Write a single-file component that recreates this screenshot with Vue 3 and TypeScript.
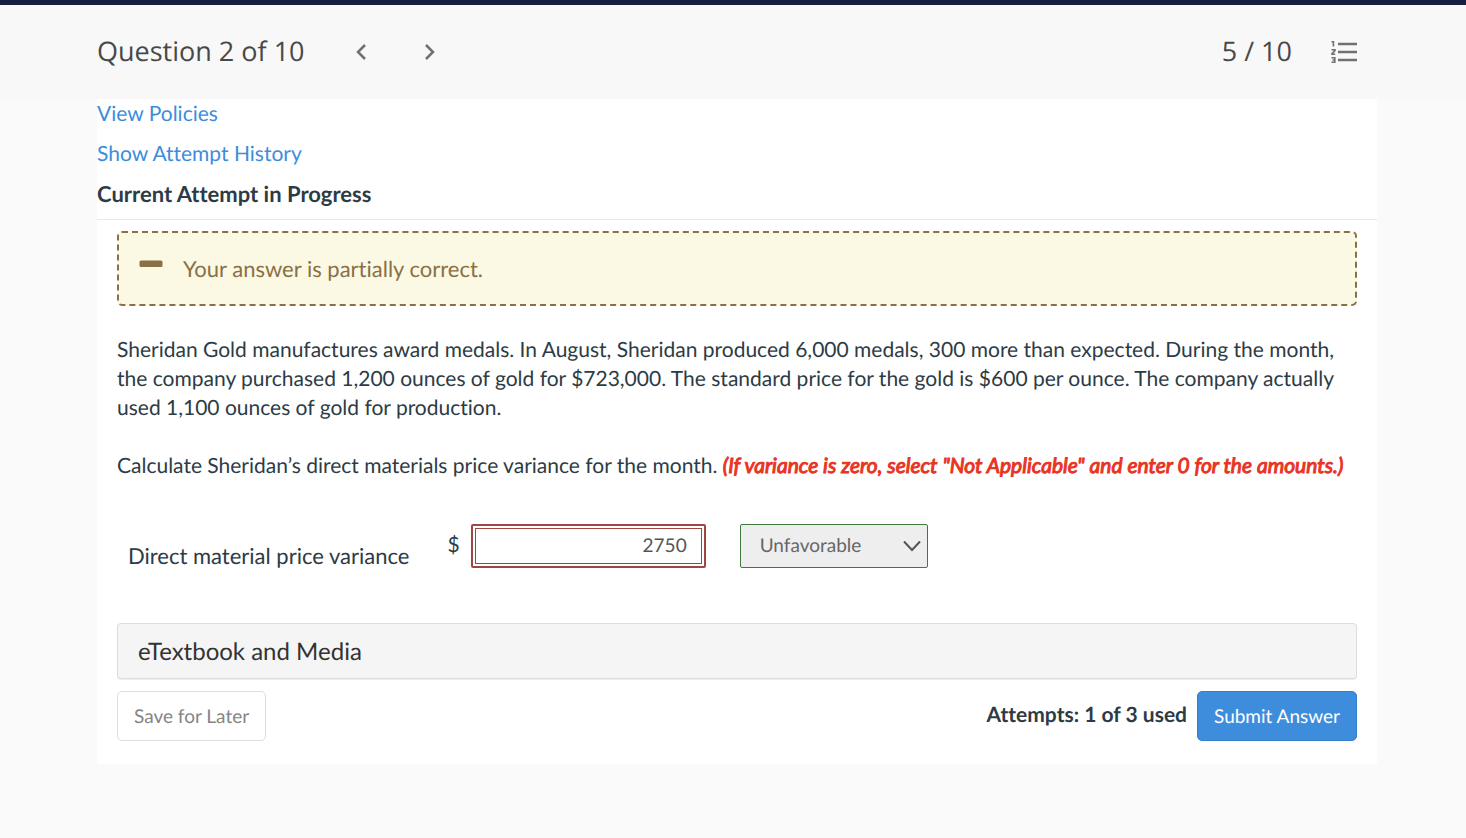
<script setup lang="ts">
import { ref } from 'vue'

const question = ref(2)
const total = 10
const amount = ref('2750')
const direction = ref('Unfavorable')
const directions: string[] = ['Favorable', 'Unfavorable', 'Not Applicable']
</script>

<template>
  <div class="page">
    <header class="topbar">
      <h1 class="title">Question {{ question }} of {{ total }}</h1>
      <nav class="pager">
        <button type="button" class="icon-btn" aria-label="Previous question">
          <svg width="12" height="18" viewBox="0 0 12 18"><path d="M10 2 L3 9 L10 16" /></svg>
        </button>
        <button type="button" class="icon-btn" aria-label="Next question">
          <svg width="12" height="18" viewBox="0 0 12 18"><path d="M2 2 L9 9 L2 16" /></svg>
        </button>
      </nav>
      <span class="score">5 / 10</span>
      <button type="button" class="icon-btn list-btn" aria-label="Question list">
        <svg width="28" height="24" viewBox="0 0 28 24">
          <path class="bars" d="M8 4 H27 M8 12 H27 M8 20 H27" />
          <path class="digits" d="M1.5 1.8 H3.4 V6.5 M1.5 9.8 H5 V10.6 L2 13.6 V14.2 H5.2 M1.5 17.8 H4.8 V22.2 H1.5 M2.5 20 H4.8" />
        </svg>
      </button>
    </header>

    <main class="sheet">
      <div class="intro">
        <a href="#policies">View Policies</a>
        <a href="#history">Show Attempt History</a>
        <h2>Current Attempt in Progress</h2>
      </div>

      <div class="body">
        <div class="alert" role="status">
          <svg width="24" height="8" viewBox="0 0 24 8" aria-hidden="true"><rect x="0.5" y="0.5" width="23" height="6.5" rx="1.5" /></svg>
          <span>Your answer is partially correct.</span>
        </div>

        <p class="text">
          Sheridan Gold manufactures award medals. In August, Sheridan produced 6,000 medals, 300 more than expected. During the month,
          the company purchased 1,200 ounces of gold for $723,000. The standard price for the gold is $600 per ounce. The company actually
          used 1,100 ounces of gold for production.
        </p>
        <p class="text">
          Calculate Sheridan’s direct materials price variance for the month.
          <em class="note">(If variance is zero, select "Not Applicable" and enter 0 for the amounts.)</em>
        </p>

        <form class="answer" @submit.prevent>
          <label class="label" for="amount">Direct material price variance</label>
          <span class="currency">$</span>
          <span class="field"><input id="amount" v-model="amount" type="text" /></span>
          <span class="picker">
            <select v-model="direction" aria-label="Variance direction">
              <option v-for="d in directions" :key="d">{{ d }}</option>
            </select>
            <svg class="caret" width="18" height="12" viewBox="0 0 18 12" aria-hidden="true"><path d="M1 1.5 L9 10 L17 1.5" /></svg>
          </span>
        </form>

        <button type="button" class="media">eTextbook and Media</button>

        <footer class="actions">
          <button type="button" class="btn">Save for Later</button>
          <strong class="attempts">Attempts: 1 of 3 used</strong>
          <button type="button" class="btn primary">Submit Answer</button>
        </footer>
      </div>
    </main>
  </div>
</template>

<style>
body {
  margin: 0;
  background: #fafafa;
}
</style>

<style scoped>
* {
  box-sizing: border-box;
}
.page {
  min-height: 100vh;
  border-top: 5px solid #161f41;
  font-family: Lato, sans-serif;
  font-size: 21px;
  line-height: 29px;
  color: #2d3b45;
  text-rendering: geometricPrecision;
  font-variant-ligatures: none;
}
button,
input,
select {
  font-family: inherit;
  text-rendering: inherit;
  font-variant-ligatures: inherit;
  margin: 0;
}
.topbar {
  display: flex;
  align-items: center;
  height: 94px;
  padding: 0 108px 0 97px;
  background: #f8f8f8;
  font-family: "Open Sans", sans-serif;
  font-size: 27px;
  color: #484848;
}
.title {
  margin: 0;
  font-size: inherit;
  font-weight: 400;
}
.title,
.score {
  padding-bottom: 3px;
}
.pager {
  display: flex;
  gap: 57px;
  margin-left: 50px;
}
.icon-btn {
  display: flex;
  padding: 0;
  border: 0;
  background: none;
}
.icon-btn path {
  fill: none;
  stroke: #707070;
  stroke-width: 2.5;
}
.icon-btn .digits {
  stroke-width: 1.6;
}
.score {
  margin-left: auto;
}
.list-btn {
  margin-left: 38px;
}
.sheet {
  margin: 0 89px 0 97px;
  background: #fff;
}
.intro {
  display: flex;
  flex-direction: column;
  align-items: flex-start;
  gap: 11px;
  padding-bottom: 11px;
  border-bottom: 1px solid #e8e8e8;
}
.intro a {
  color: #3d8ddb;
  text-decoration: none;
}
.intro h2 {
  margin: 0;
  font-size: 22px;
  font-weight: 700;
}
.body {
  padding: 11px 20px 23px;
}
.alert {
  display: flex;
  align-items: center;
  gap: 20px;
  height: 75px;
  padding: 0 20px;
  border: 2px dashed #8a7045;
  border-radius: 5px;
  background: #fbf8e4;
  color: #8a7045;
  font-size: 22px;
}
.alert svg {
  fill: #8a7045;
  margin-bottom: 10px;
}
.text {
  margin: 29px 0;
}
.note {
  color: #e93323;
  font-style: italic;
  -webkit-text-stroke: 1px #e93323;
}
.answer {
  display: flex;
  align-items: center;
  margin: 41px 0 53px;
  padding-left: 11px;
}
.label {
  padding-top: 20px;
  font-size: 22px;
}
.currency {
  margin-left: 38px;
  padding-bottom: 3px;
}
.field {
  width: 235px;
  height: 44px;
  margin-left: 11px;
  padding: 2px;
  border: 2px solid #9f4542;
  border-radius: 2px;
}
.field input {
  display: block;
  width: 100%;
  height: 100%;
  padding: 0 14px;
  border: 1px solid #9f4542;
  background: #fff;
  color: #555;
  font-size: 19px;
  text-align: right;
}
.picker {
  position: relative;
  margin-left: 34px;
}
.picker select {
  display: block;
  appearance: none;
  width: 188px;
  height: 44px;
  padding: 0 19px;
  border: 1px solid #3f7a3d;
  border-radius: 2px;
  background: #eee;
  color: #666;
  font-size: 19px;
}
.caret {
  position: absolute;
  top: 16px;
  right: 7px;
  fill: none;
  stroke: #555;
  stroke-width: 2;
  pointer-events: none;
}
.media {
  display: block;
  width: 100%;
  height: 56px;
  padding: 0 20px;
  border: 1px solid #ddd;
  border-radius: 4px;
  background: #f5f5f5;
  box-shadow: 0 1px 1px rgba(0, 0, 0, 0.08);
  color: #333;
  font-size: 24px;
  text-align: left;
}
.actions {
  display: flex;
  align-items: center;
  margin-top: 12px;
}
.btn {
  height: 50px;
  padding: 0 16px;
  border: 1px solid #ddd;
  border-radius: 5px;
  background: #fff;
  color: #858585;
  font-size: 19px;
}
.primary {
  border-color: #3580ca;
  background: #3e8ddd;
  color: #fff;
}
.attempts {
  margin: 0 10px 4px auto;
}
</style>
